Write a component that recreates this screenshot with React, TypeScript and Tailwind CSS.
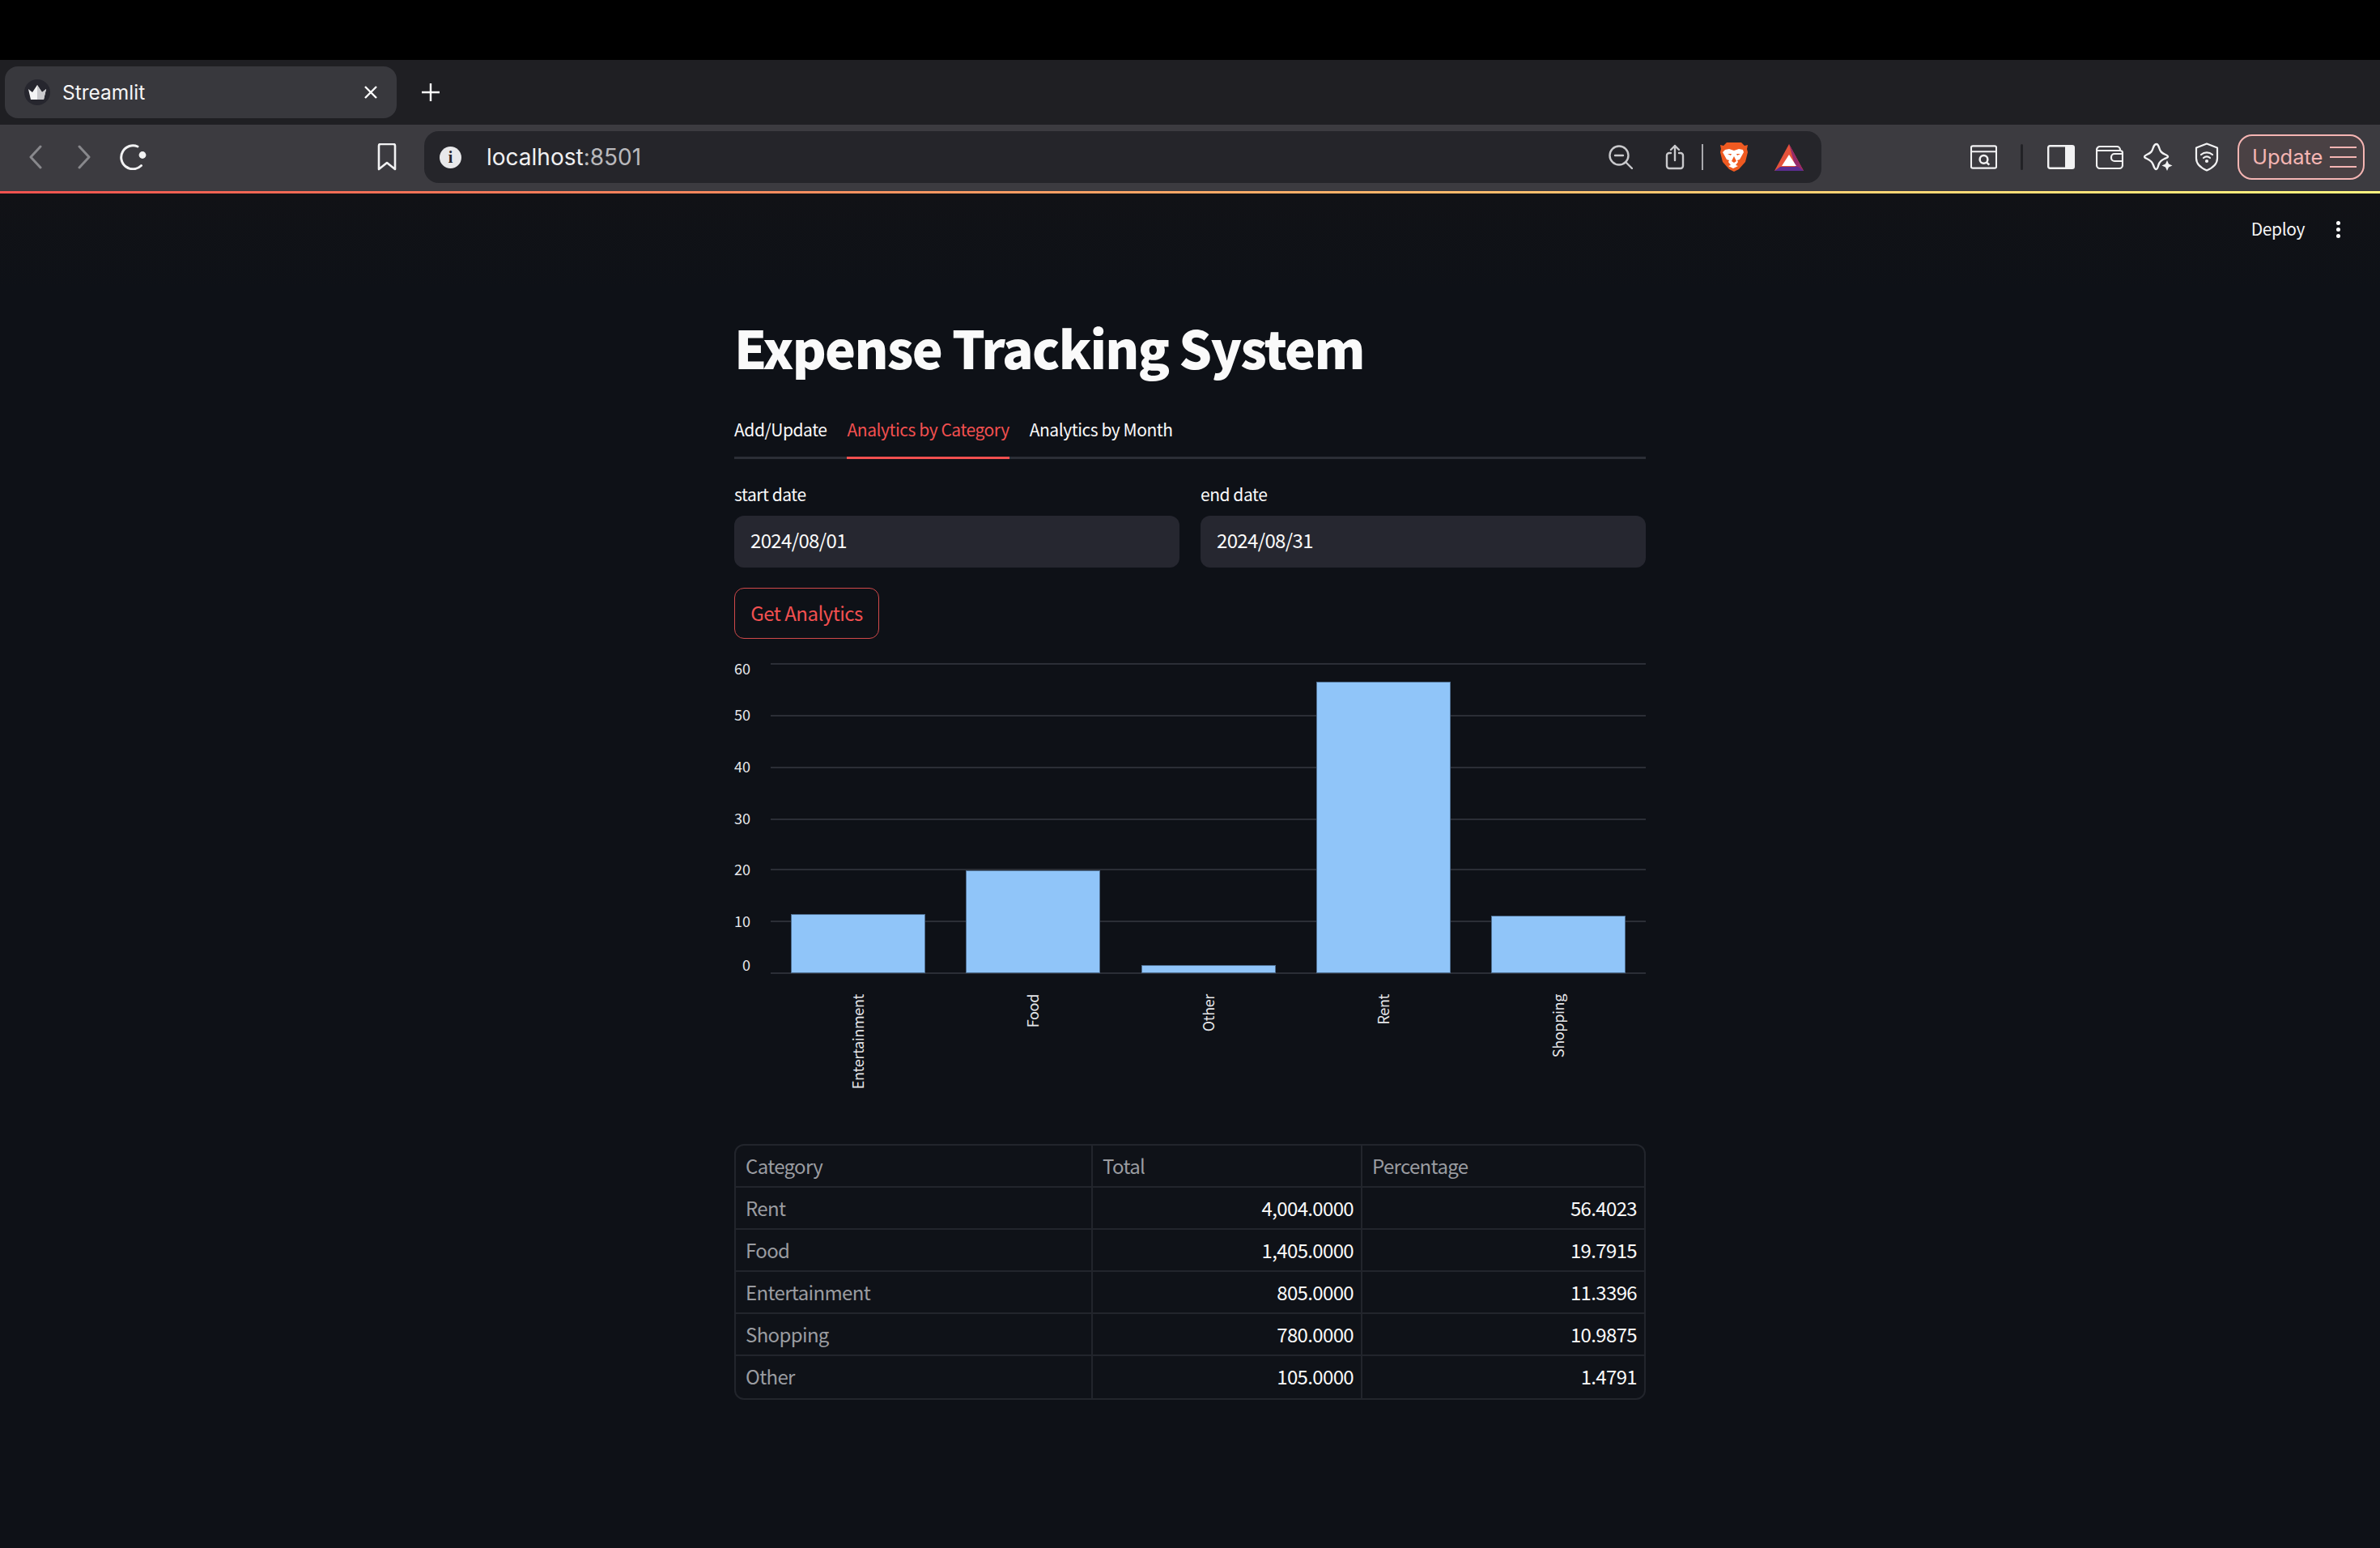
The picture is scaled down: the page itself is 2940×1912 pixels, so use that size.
import React from "react";

const ST = { fontFamily: '"Noto Sans CJK SC", "Noto Sans", sans-serif' } as React.CSSProperties;

const rows = [
  ["Rent", "4,004.0000", "56.4023"],
  ["Food", "1,405.0000", "19.7915"],
  ["Entertainment", "805.0000", "11.3396"],
  ["Shopping", "780.0000", "10.9875"],
  ["Other", "105.0000", "1.4791"],
];

const grid = [
  { y: 820, label: "60", ly: 825 },
  { y: 884, label: "50", ly: 882 },
  { y: 948, label: "40", ly: 946 },
  { y: 1012, label: "30", ly: 1010 },
  { y: 1074, label: "20", ly: 1073 },
  { y: 1138, label: "10", ly: 1137 },
  { y: 1202, label: "0", ly: 1191 },
];

const bars = [
  { x: 977, top: 1129, name: "Entertainment", cx: 1059 },
  { x: 1193, top: 1075, name: "Food", cx: 1275 },
  { x: 1410, top: 1192, name: "Other", cx: 1492 },
  { x: 1626, top: 842, name: "Rent", cx: 1708 },
  { x: 1842, top: 1131, name: "Shopping", cx: 1924 },
];

function Chart() {
  return (
    <svg width="1126" height="540" viewBox="907 810 1126 540" className="mt-[21px] block shrink-0">
      {grid.map((g) => (
        <g key={g.label}>
          <line x1="952" x2="2033" y1={g.y} y2={g.y} stroke="#2b2e36" strokeWidth="2" />
          <text x="927" y={g.ly} textAnchor="end" dominantBaseline="central" fill="#e6e7ea" fontSize="18" style={ST}>
            {g.label}
          </text>
        </g>
      ))}
      {bars.map((b) => (
        <g key={b.name}>
          <rect x={b.x + 0.5} y={b.top + 0.5} width="165" height={1202 - b.top - 1} fill="#90c5f9" stroke="#4f6f91" strokeWidth="1" />
          <text
            transform={`translate(${b.cx} 1228) rotate(-90)`}
            textAnchor="end"
            dominantBaseline="central"
            fill="#e6e7ea"
            fontSize="18"
            letterSpacing="-0.35"
            style={ST}
          >
            {b.name}
          </text>
        </g>
      ))}
    </svg>
  );
}

function Brave() {
  return (
    <svg width="34" height="36" viewBox="0 0 34 36" className="shrink-0">
      <path d="M8 0h18l4 4 4-1-1 5 1 4-3 12-8 9-6 3-6-3-8-9L0 12l1-4-1-5 4 1z" fill="#ef5a21" />
      <path d="M6 9l5-1 6 2 6-2 5 1 1 3-5 9-3 1 1 2-3 4 3 1-6 3-6-3 3-1-3-4 1-2-3-1-5-9z" fill="#fff" />
      <path d="M13 16l-4-2 5 0zM21 16l4-2-5 0zM14 23l3-6 3 6-3 2z" fill="#ef5a21" />
    </svg>
  );
}

function Bat() {
  return (
    <svg width="36" height="33" viewBox="0 0 36 33" className="shrink-0">
      <path d="M18 0L0 33h36z" fill="#e5523a" />
      <path d="M18 0L36 33H27z" fill="#96296a" />
      <path d="M0 33l7-5h22l7 5z" fill="#5c2d91" />
      <path d="M18 13L27 27H9z" fill="#fff" />
    </svg>
  );
}

export default function App() {
  return (
    <div className="w-[2940px] h-[1912px] flex flex-col overflow-hidden bg-[#0e1117]" style={ST}>
      <div className="h-[74px] bg-black shrink-0" />

      {/* tab strip */}
      <div className="h-[80px] shrink-0 bg-[#1f1f23] flex items-center pl-[6px] font-['Inter']">
        <div className="w-[484px] h-[64px] rounded-[16px] bg-[#38383d] flex items-center pl-[24px] pr-[24px] text-white">
          <div className="w-[32px] h-[32px] rounded-full bg-[#26262e] flex items-center justify-center shrink-0">
            <svg width="24" height="18" viewBox="0 0 24 18">
              <path d="M1 5l5 4 6-9 6 9 5-4-3 13H4z" fill="#f4f4f4" />
              <path d="M12 0l6 9 5-4-3 13h-8z" fill="#c9c9cc" />
            </svg>
          </div>
          <span className="ml-[15px] text-[24.5px] leading-none text-[#f5f5f6]">Streamlit</span>
          <svg width="16" height="16" viewBox="0 0 16 16" className="ml-auto" fill="none" stroke="#fff" strokeWidth="2.4">
            <path d="M1 1l14 14M15 1L1 15" />
          </svg>
        </div>
        <svg width="24" height="24" viewBox="0 0 24 24" className="ml-[30px]" fill="none" stroke="#fff" strokeWidth="2.4">
          <path d="M12 1v22M1 12h22" />
        </svg>
      </div>

      {/* toolbar */}
      <div className="h-[82px] shrink-0 bg-[#3c3b40] flex items-center pb-[2px] font-['Inter']">
        <svg width="16" height="30" viewBox="0 0 16 30" className="ml-[36px] shrink-0" fill="none" stroke="#88888c" strokeWidth="3" strokeLinecap="round" strokeLinejoin="round">
          <path d="M14 2L2 15l12 13" />
        </svg>
        <svg width="16" height="30" viewBox="0 0 16 30" className="ml-[44px] shrink-0" fill="none" stroke="#88888c" strokeWidth="3" strokeLinecap="round" strokeLinejoin="round">
          <path d="M2 2l12 13L2 28" />
        </svg>
        <svg width="34" height="32" viewBox="0 0 34 32" className="ml-[35px] shrink-0" fill="none">
          <path d="M23 3A14.500 14.500 0 1 0 27.500 26.500" stroke="#f2f2f3" strokeWidth="3" strokeLinecap="round" />
          <circle cx="29" cy="13.500" r="4.400" fill="#f2f2f3" />
        </svg>
        <svg width="24" height="34" viewBox="0 0 24 34" className="ml-[285px] shrink-0" fill="none" stroke="#f2f2f3" strokeWidth="2.6" strokeLinejoin="round">
          <path d="M2 3a2 2 0 0 1 2-2h16a2 2 0 0 1 2 2v29l-10-8-10 8z" />
        </svg>

        {/* address bar */}
        <div className="ml-[34px] w-[1726px] h-[64px] rounded-[18px] bg-[#25252a] flex items-center shrink-0">
          <div className="ml-[19px] w-[27px] h-[27px] rounded-full bg-[#e8e8ea] flex items-center justify-center shrink-0 text-[#25252a] text-[20px] font-bold leading-none font-['Liberation_Serif']">
            i
          </div>
          <span className="ml-[31px] text-[28px] leading-none">
            <span className="text-[#f0f0f1]">localhost</span>
            <span className="text-[#b9b9bc]">:8501</span>
          </span>

          <svg width="30" height="30" viewBox="0 0 30 30" className="ml-auto mr-[-2px] shrink-0" fill="none" stroke="#c9c9cc" strokeWidth="2.4" strokeLinecap="round">
            <circle cx="13" cy="13" r="11.500" />
            <path d="M8 13h10M21 21l8 8" />
          </svg>
          <svg width="24" height="32" viewBox="0 0 24 32" className="ml-[42px] shrink-0" fill="none" stroke="#c9c9cc" strokeWidth="2.4" strokeLinecap="round" strokeLinejoin="round">
            <path d="M7 11H5a3 3 0 0 0-3 3v13a3 3 0 0 0 3 3h14a3 3 0 0 0 3-3V14a3 3 0 0 0-3-3h-2M12 20V2M7 7l5-5 5 5" />
          </svg>
          <div className="ml-[21px] w-[2px] h-[32px] bg-[#a9a9ad] shrink-0" />
          <div className="ml-[21px] shrink-0 flex"><Brave /></div>
          <div className="ml-[33px] mr-[22px] shrink-0 flex"><Bat /></div>
        </div>

        {/* right icons */}
        <svg width="33" height="30" viewBox="0 0 34 30" className="ml-[184px] shrink-0" fill="none" stroke="#f2f2f3" strokeWidth="2.2" strokeLinejoin="round">
          <rect x="1" y="1" width="32" height="28" rx="2" />
          <path d="M1 8h32" />
          <circle cx="17" cy="18" r="5" strokeWidth="2.6" />
          <path d="M21 22l3 3" strokeWidth="2.6" />
        </svg>
        <div className="ml-[29px] w-[3px] h-[32px] rounded-full bg-[#222226] shrink-0" />
        <svg width="34" height="30" viewBox="0 0 34 30" className="ml-[30px] shrink-0" fill="none">
          <path d="M22 2h9a2 2 0 0 1 2 2v22a2 2 0 0 1-2 2h-9z" fill="#f2f2f3" />
          <rect x="1.200" y="1.200" width="31.600" height="27.600" rx="2" stroke="#f2f2f3" strokeWidth="2.4" />
        </svg>
        <svg width="34" height="30" viewBox="0 0 34 30" className="ml-[26px] shrink-0" fill="none" stroke="#f2f2f3" strokeWidth="2.2" strokeLinejoin="round">
          <path d="M1 6a4 4 0 0 1 4-4h21a4 4 0 0 1 4 4M1 6v19a4 4 0 0 0 4 4h24a4 4 0 0 0 4-4V10a3 3 0 0 0-3-3H2" />
          <path d="M33 11H23a4 4 0 0 0-4 4v1a4 4 0 0 0 4 4h10" />
        </svg>
        <svg width="36" height="36" viewBox="0 0 36 36" className="ml-[25px] shrink-0" fill="none">
          <path d="M16 2c1.500 0 2 1 3 4 1.500 5 3 7 8 9 2.500 1 3 1.500 3 2.500S29 19 26 20c-4 1.500-6 3-7.500 7.500C17.500 31 17 33 15.500 33S13 31 12 28c-1.500-4.500-3.500-6-8-8-2.500-1-3-1.500-3-2.500s1-1.500 3-2.500c5-2 6.500-4 8-9 1-3 2-4 4-4z" stroke="#f2f2f3" strokeWidth="2.4" />
          <path d="M29 22l2 4.500 4.500 2-4.500 2-2 4.500-2-4.500-4.500-2 4.500-2z" fill="#f2f2f3" />
        </svg>
        <svg width="30" height="36" viewBox="0 0 30 36" className="ml-[27px] shrink-0" fill="none" stroke="#f2f2f3" strokeWidth="2.2" strokeLinecap="round" strokeLinejoin="round">
          <path d="M15 1.500l13 5v13c0 7-6 12-13 15C8 31.500 2 26.500 2 19.500v-13z" />
          <path d="M8 15c4-3.500 10-3.500 14 0M11 19c2.500-2 5.500-2 8 0" />
          <circle cx="15" cy="23" r="1" fill="#f2f2f3" />
        </svg>
        <div className="ml-[23px] w-[157px] h-[56px] rounded-[18px] border-2 border-[#f5b5b3] bg-[#4a4144] flex items-center pl-[16px] shrink-0">
          <span className="text-[25.5px] leading-none text-[#f5b5b3]">Update</span>
          <div className="ml-[9px] flex flex-col gap-[10px]">
            <div className="w-[33px] h-[2px] bg-[#f5b5b3]" />
            <div className="w-[33px] h-[2px] bg-[#f5b5b3]" />
            <div className="w-[33px] h-[2px] bg-[#f5b5b3]" />
          </div>
        </div>
      </div>

      {/* progress line */}
      <div className="h-[3px] shrink-0 bg-gradient-to-r from-[#f0524f] to-[#fdf57f]" />

      {/* streamlit header */}
      <div className="h-[120px] shrink-0 bg-gradient-to-b from-[#111216] to-[#0e1117] flex justify-end pt-[28px] pr-[49px]">
        <span className="text-[21px] leading-[30px] tracking-[-0.4px] text-[#f5f5f6]">Deploy</span>
        <div className="ml-[39px] mt-[6px] flex flex-col gap-[3px]">
          <div className="w-[5px] h-[5px] rounded-full bg-white" />
          <div className="w-[5px] h-[5px] rounded-full bg-white" />
          <div className="w-[5px] h-[5px] rounded-full bg-white" />
        </div>
      </div>

      {/* main column */}
      <div className="w-[1126px] mx-auto flex flex-col text-[#fafafa]">
        <h1 className="mt-[19px] h-[100px] text-[64px] leading-[100px] font-black tracking-[-1.75px] whitespace-nowrap">Expense Tracking System</h1>

        <div className="mt-[27px] h-[62px] border-b-[3px] border-[#2b2e36] flex gap-[25px] text-[21px] tracking-[-0.45px]">
          <div className="h-[62px] leading-[50px]">Add/Update</div>
          <div className="h-[62px] leading-[50px] text-[#f25050] border-b-[3px] border-[#f25050]">Analytics by Category</div>
          <div className="h-[62px] leading-[50px]">Analytics by Month</div>
        </div>

        <div className="mt-[30px] grid grid-cols-2 gap-[26px]">
          {["start date:2024/08/01", "end date:2024/08/31"].map((s) => {
            const [label, value] = s.split(":");
            return (
              <div key={label}>
                <div className="h-[30px] text-[21px] leading-[26px] tracking-[-0.45px]">{label}</div>
                <div className="mt-[10px] h-[64px] rounded-[12px] bg-[#262730] pl-[20px] text-[24px] leading-[60px] tracking-[-0.65px]">{value}</div>
              </div>
            );
          })}
        </div>

        <div className="mt-[25px] w-[179px] h-[63px] rounded-[12px] border-[1.5px] border-[#d0494a] text-[#f25050] text-[24px] tracking-[-0.5px] leading-[59px] text-center">
          Get Analytics
        </div>

        <Chart />

        <div className="mt-[63px] rounded-[12px] border-2 border-[#22252c] bg-[#0f1218] grid grid-cols-[441px_333px_1fr] text-[24px] tracking-[-0.65px] overflow-hidden">
          {["Category", "Total", "Percentage"].map((h, i) => (
            <div key={h} className={`h-[52px] pl-[12px] leading-[49px] text-[#9a9ca1] border-b-2 border-[#22252c] ${i < 2 ? "border-r-2" : ""}`}>
              {h}
            </div>
          ))}
          {rows.map((r, ri) => (
            <React.Fragment key={r[0]}>
              <div className={`h-[52px] pl-[12px] leading-[49px] text-[#9a9ca1] border-r-2 border-[#22252c] ${ri < 4 ? "border-b-2" : ""}`}>{r[0]}</div>
              <div className={`h-[52px] pr-[9px] leading-[49px] text-right text-[#fafafa] border-r-2 border-[#22252c] ${ri < 4 ? "border-b-2" : ""}`}>{r[1]}</div>
              <div className={`h-[52px] pr-[9px] leading-[49px] text-right text-[#fafafa] border-[#22252c] ${ri < 4 ? "border-b-2" : ""}`}>{r[2]}</div>
            </React.Fragment>
          ))}
        </div>
      </div>
    </div>
  );
}
